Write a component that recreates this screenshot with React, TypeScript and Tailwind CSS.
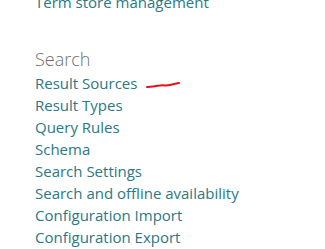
import React from 'react';

const links = [
  'Result Sources',
  'Result Types',
  'Query Rules',
  'Schema',
  'Search Settings',
  'Search and offline availability',
  'Configuration Import',
  'Configuration Export',
];

export default function App() {
  return (
    <div className="h-[249px] w-[325px] overflow-hidden bg-white pl-[35px] font-['Open_Sans',sans-serif]">
      <div className="-mt-[9px] text-[15px] leading-[22px] text-[#2a7886]">Term store management</div>
      <div className="mt-[34px] text-[18px] font-light leading-[25px] text-[#6f6f6f]">Search</div>
      <ul>
        {links.map((label, i) => (
          <li key={label} className="flex items-center text-[15px] leading-[22px] text-[#2a7886]">
            <span>{label}</span>
            {i === 0 && (
              <svg width="34" height="10" viewBox="0 0 34 10" className="ml-[9px] mt-[4px]">
                <path
                  d="M1 7 C6 7, 9 6, 14 5.5 C18 5, 20 6, 24 5 C28 4, 30 3.5, 33 3"
                  fill="none"
                  stroke="#e8101a"
                  strokeWidth="2"
                  strokeLinecap="round"
                />
              </svg>
            )}
          </li>
        ))}
      </ul>
    </div>
  );
}
